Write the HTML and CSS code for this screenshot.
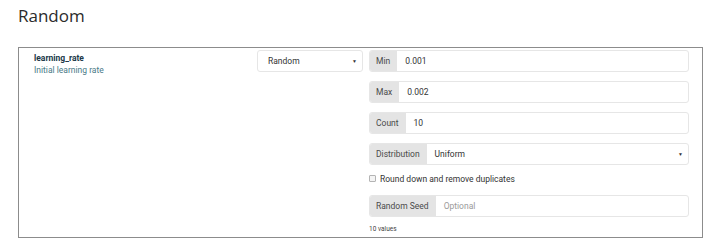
FILE: index.html
```html
<!DOCTYPE html>
<html>
<head>
<meta charset="utf-8">
<link rel="stylesheet" href="styles.css">
</head>
<body>
<div class="page">
  <h1 class="title">Random</h1>
  <div class="panel">
    <div class="param">
      <div class="param-name">learning_rate</div>
      <div class="param-desc">Initial learning rate</div>
    </div>
    <div class="mode">
      <div class="select">
        <span>Random</span>
        <span class="caret">▼</span>
      </div>
    </div>
    <div class="fields">
      <div class="group">
        <span class="addon">Min</span>
        <span class="value">0.001</span>
      </div>
      <div class="group">
        <span class="addon">Max</span>
        <span class="value">0.002</span>
      </div>
      <div class="group">
        <span class="addon">Count</span>
        <span class="value">10</span>
      </div>
      <div class="group">
        <span class="addon">Distribution</span>
        <span class="value grow">Uniform</span>
        <span class="caret">▼</span>
      </div>
      <label class="check">
        <span class="box"></span>
        <span>Round down and remove duplicates</span>
      </label>
      <div class="group seed">
        <span class="addon">Random Seed</span>
        <span class="value placeholder">Optional</span>
      </div>
      <div class="note">10 values</div>
    </div>
  </div>
</div>
</body>
</html>
```
FILE: styles.css
```css
html, body {
  margin: 0;
  padding: 0;
  background: #ffffff;
}

.page {
  padding: 0 0 0 18px;
  font-family: Roboto, "Liberation Sans", sans-serif;
}

.title {
  margin: 0;
  padding-top: 4px;
  height: 47px;
  box-sizing: border-box;
  font-family: "Open Sans", "Liberation Sans", sans-serif;
  font-weight: 400;
  font-size: 17px;
  line-height: 23px;
  color: #2b2b2b;
}

.panel {
  width: 685px;
  height: 191px;
  box-sizing: border-box;
  border: 1px solid #8c8c8c;
  padding: 2px 13px 0 15px;
  display: flex;
  align-items: flex-start;
}

.param {
  flex: 0 0 223px;
  padding-top: 2px;
}

.param-name {
  font-size: 8.5px;
  line-height: 12px;
  font-weight: 700;
  color: #203848;
}

.param-desc {
  font-size: 8.5px;
  line-height: 12px;
  color: #4a7a88;
}

.mode {
  flex: 0 0 106px;
  margin-right: 6px;
}

.select {
  height: 22px;
  box-sizing: border-box;
  border: 1px solid #e6e6e6;
  border-radius: 3px;
  display: flex;
  align-items: center;
  justify-content: space-between;
  padding: 0 5px 0 10px;
  font-size: 8.5px;
  color: #333;
}

.caret {
  font-size: 5px;
  color: #333;
}

.fields {
  flex: 0 0 320px;
  display: flex;
  flex-direction: column;
}

.group {
  height: 22px;
  box-sizing: border-box;
  border: 1px solid #e6e6e6;
  border-radius: 3px;
  display: flex;
  align-items: stretch;
  margin-bottom: 9px;
  font-size: 8.5px;
  color: #333;
  overflow: hidden;
}

.group .caret {
  align-self: center;
  padding-right: 5px;
}

.addon {
  background: #e4e4e4;
  color: #4a4a4a;
  padding: 0 7px;
  display: flex;
  align-items: center;
  margin: -1px 0 -1px -1px;
}

.value {
  display: flex;
  align-items: center;
  padding-left: 8px;
}

.grow {
  flex: 1;
}

.placeholder {
  color: #9a9a9a;
}

.check {
  display: flex;
  align-items: center;
  gap: 4px;
  height: 11px;
  margin-top: -1px;
  margin-bottom: 11px;
  font-size: 8.5px;
  color: #333;
}

.box {
  width: 5px;
  height: 5px;
  border: 1px solid #b4b4b4;
  border-radius: 1px;
  background: #f4f4f4;
}

.seed {
  margin-bottom: 7px;
}

.note {
  font-size: 6.5px;
  line-height: 10px;
  color: #444;
}
```
